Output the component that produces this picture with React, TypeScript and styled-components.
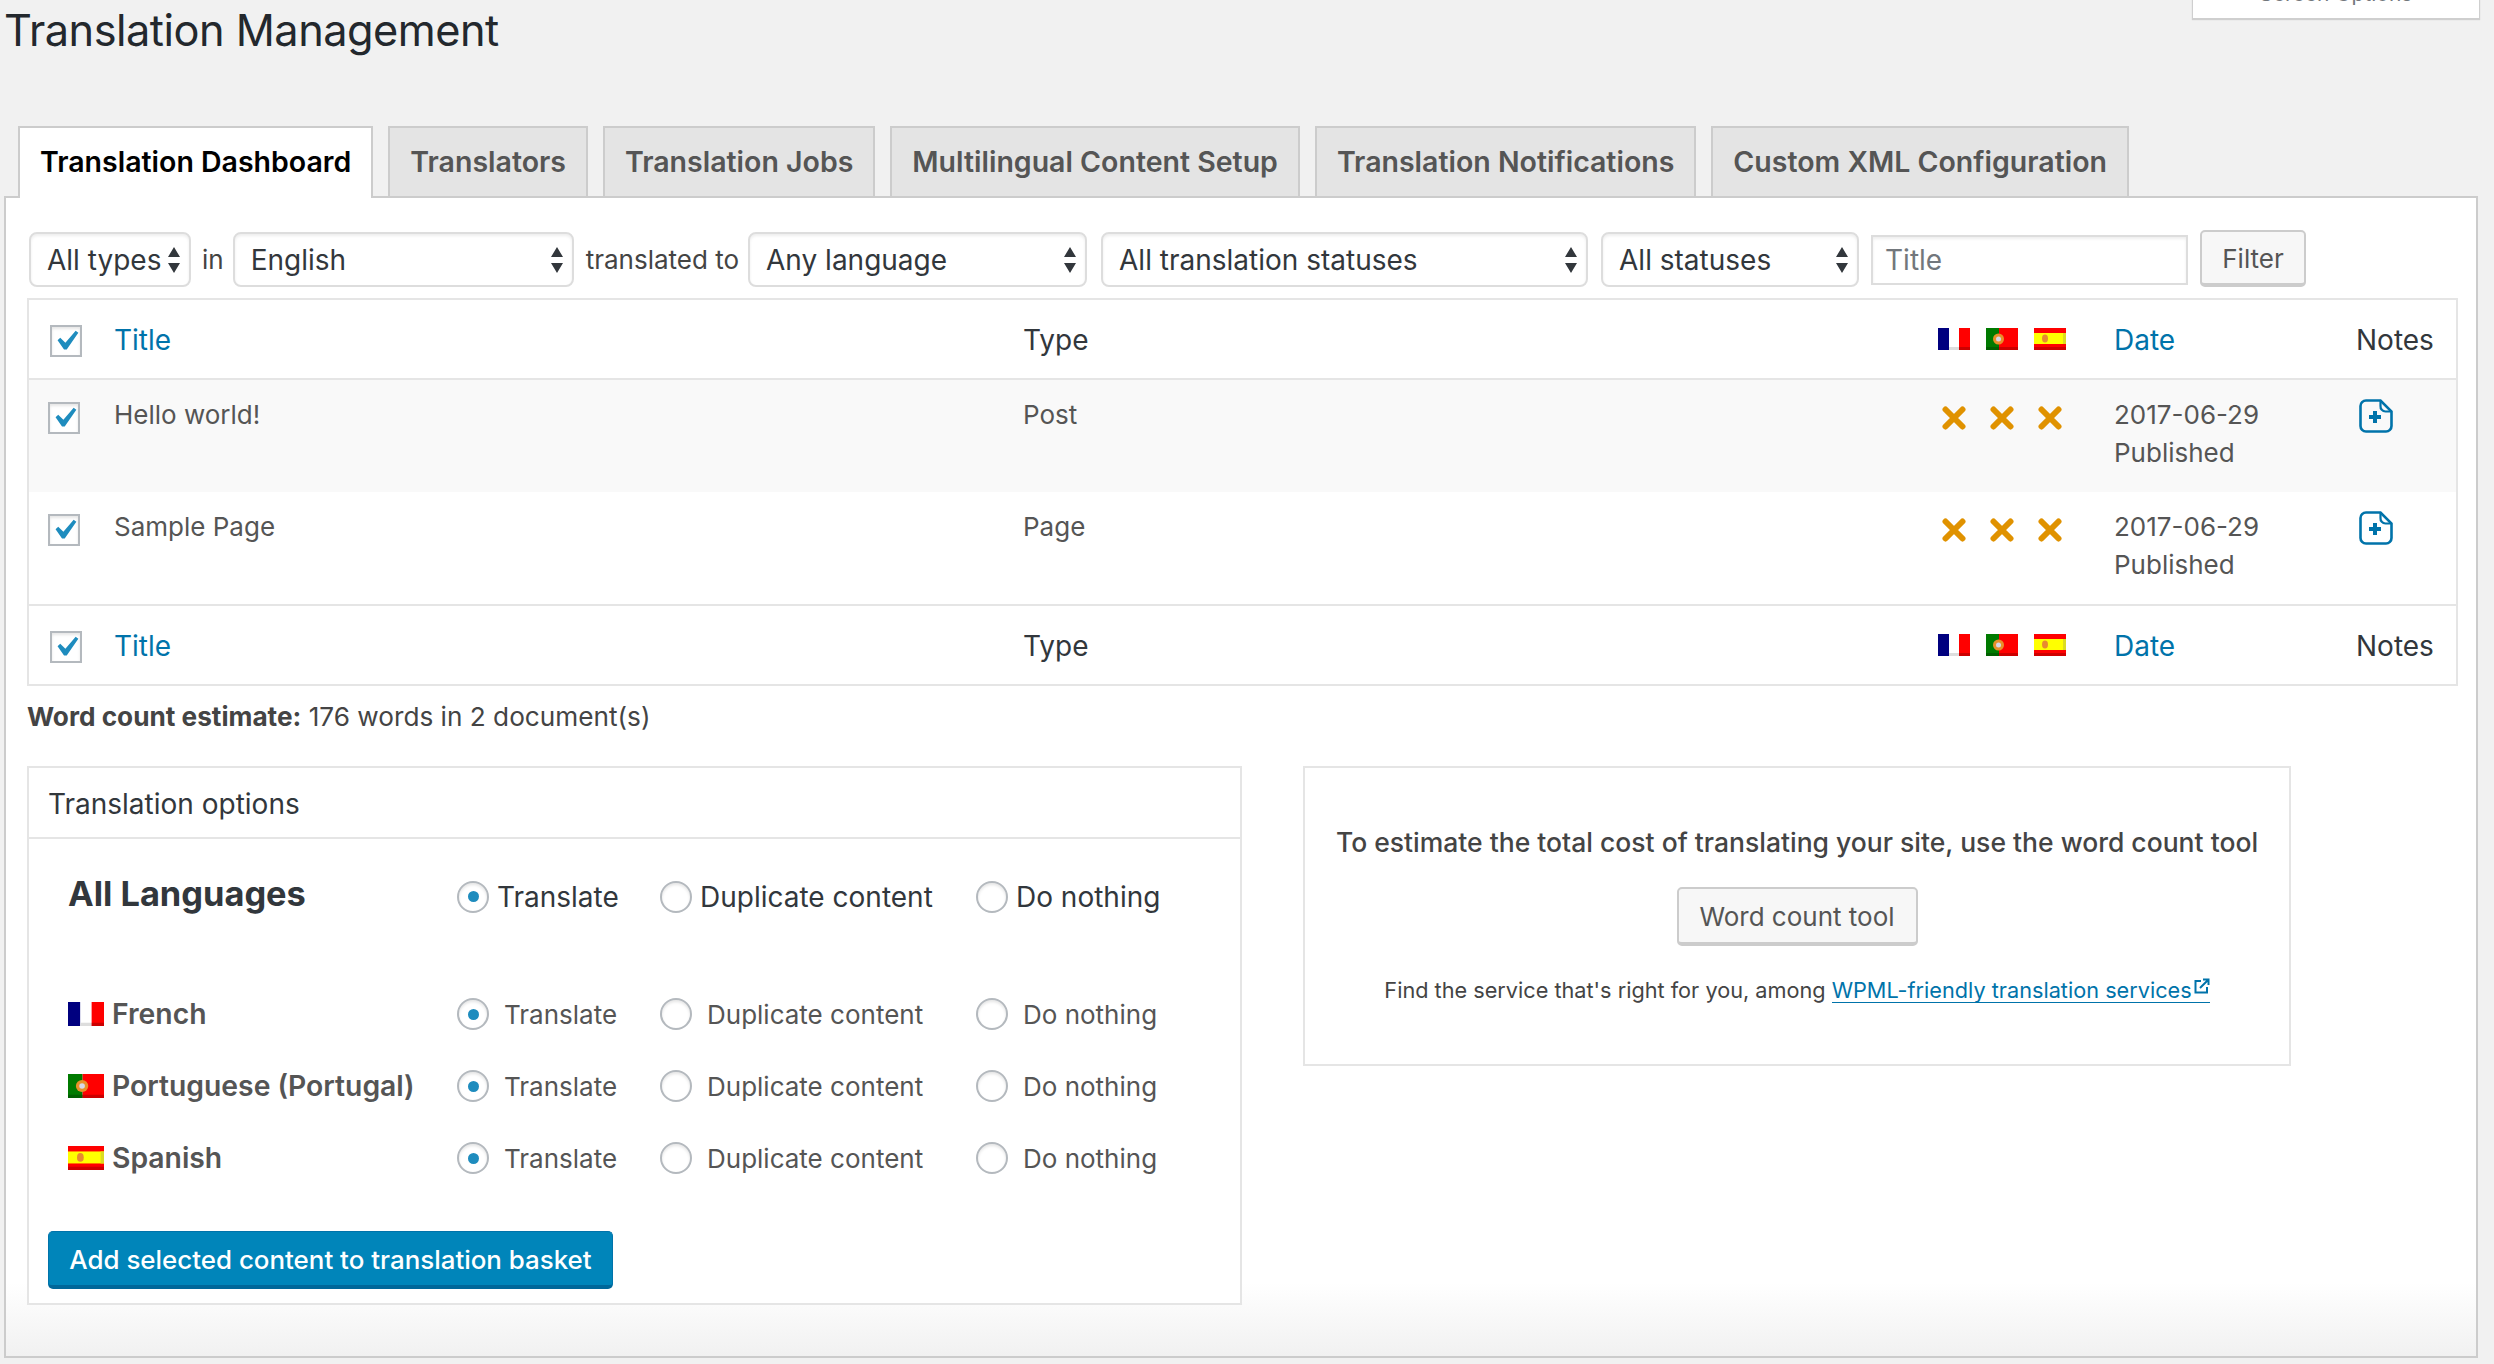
import { FC } from 'react';
import styled, { createGlobalStyle } from 'styled-components';

const GlobalStyle = createGlobalStyle`
  html, body {
    margin: 0;
    padding: 0;
    background: #f1f1f1;
  }
  body {
    font-family: Inter, "Liberation Sans", sans-serif;
    color: #444;
  }
`;

const Page = styled.div`
  position: relative;
  width: 2494px;
  height: 1364px;
  overflow: hidden;
  padding: 0 16px 0 4px;
  box-sizing: border-box;
`;

const ScreenOptions = styled.div`
  position: absolute;
  top: 0;
  right: 15px;
  width: 286px;
  height: 18px;
  box-sizing: border-box;
  overflow: hidden;
  background: #fff;
  box-shadow: 0 1px 1px 1px rgba(0, 0, 0, 0.14);
  font-size: 21px;
  line-height: 24px;
  color: #72777c;
  text-align: center;
  span {
    display: block;
    margin-top: -18px;
  }
`;

const Heading = styled.h1`
  margin: 0;
  height: 126px;
  font-size: 43.3px;
  font-weight: 400;
  letter-spacing: -0.5px;
  line-height: 60px;
  color: #23282d;
`;

const Tabs = styled.div`
  display: flex;
  gap: 15px;
  margin-left: 14px;
  height: 72px;
`;

const Tab = styled.div<{ $active?: boolean }>`
  height: ${(p) => (p.$active ? 72 : 70)}px;
  box-sizing: border-box;
  padding: 0 20px;
  border: 2px solid #ccc;
  border-bottom: ${(p) => (p.$active ? 'none' : '0')};
  background: ${(p) => (p.$active ? '#fff' : '#e4e4e4')};
  color: ${(p) => (p.$active ? '#000' : '#555')};
  font-size: 28.5px;
  font-weight: 600;
  line-height: 68px;
  white-space: nowrap;
  position: relative;
  z-index: 1;
`;

const Panel = styled.div`
  margin-top: -2px;
  height: 1162px;
  box-sizing: border-box;
  border: 2px solid #ccc;
  padding: 34px 18px 0 21px;
  background: linear-gradient(to bottom, #fff 0, #fff 1085px, #f1f1f1 100%);
`;

const FilterBar = styled.div`
  display: flex;
  align-items: center;
  height: 55px;
  color: #444;
  font-size: 26px;
`;

const SelectBox = styled.div<{ $w: number; $ml: number }>`
  width: ${(p) => p.$w}px;
  margin-left: ${(p) => p.$ml}px;
  height: 55px;
  box-sizing: border-box;
  display: flex;
  align-items: center;
  justify-content: space-between;
  padding: 0 9px 0 16px;
  border: 2px solid #ddd;
  border-radius: 8px;
  background: #fff;
  box-shadow: inset 0 2px 3px rgba(0, 0, 0, 0.07);
  color: #32373c;
  font-size: 28px;
  flex: none;
`;

const FilterText = styled.span<{ $ml: number }>`
  margin-left: ${(p) => p.$ml}px;
  flex: none;
`;

const TitleInput = styled.div`
  width: 317px;
  height: 50px;
  margin-left: 12px;
  box-sizing: border-box;
  padding-left: 12px;
  border: 2px solid #ddd;
  background: #fff;
  box-shadow: inset 0 2px 3px rgba(0, 0, 0, 0.07);
  color: #72777c;
  font-size: 28px;
  line-height: 46px;
  flex: none;
`;

const GreyButton = styled.div<{ $w: number; $h: number }>`
  width: ${(p) => p.$w}px;
  height: ${(p) => p.$h}px;
  box-sizing: border-box;
  padding-top: 2px;
  border: 2px solid #ccc;
  border-bottom-width: 4px;
  border-radius: 5px;
  background: #f7f7f7;
  color: #555;
  font-size: 26px;
  display: flex;
  align-items: center;
  justify-content: center;
  flex: none;
`;

const FilterButton = styled(GreyButton)`
  margin-left: 12px;
  margin-top: -2px;
`;

const Table = styled.div`
  margin-top: 11px;
  border: 2px solid #e5e5e5;
  background: #fff;
`;

const Row = styled.div<{ $h: number; $alt?: boolean; $center?: boolean; $line?: boolean }>`
  display: grid;
  grid-template-columns: 85px 909px 915px 176px 242px 1fr;
  height: ${(p) => p.$h}px;
  box-sizing: border-box;
  align-items: ${(p) => (p.$center ? 'center' : 'start')};
  padding-top: ${(p) => (p.$center ? 2 : 16)}px;
  background: ${(p) => (p.$alt ? '#f9f9f9' : '#fff')};
  border-bottom: ${(p) => (p.$line ? '2px solid #e5e5e5' : 'none')};
  font-size: ${(p) => (p.$center ? 28 : 26)}px;
  line-height: 38px;
  color: ${(p) => (p.$center ? '#32373c' : '#555')};
`;

const CheckCell = styled.div<{ $pl: number; $mt: number }>`
  padding-left: ${(p) => p.$pl}px;
  margin-top: ${(p) => p.$mt}px;
  display: flex;
`;

const SortLink = styled.span`
  color: #0073aa;
`;

const FlagCell = styled.div`
  display: flex;
  gap: 16px;
  margin-top: -3px;
`;

const MarkCell = styled.div`
  display: flex;
  gap: 24px;
  padding-left: 4px;
  margin-top: 10px;
`;

const NoteCell = styled.div`
  margin-top: 3px;
  margin-left: 3px;
  display: flex;
`;

const WordCount = styled.p`
  margin: 12px 0 0 0;
  font-size: 26.2px;
  line-height: 38px;
  color: #444;
`;

const Columns = styled.div`
  display: flex;
  align-items: flex-start;
  gap: 61px;
  margin-top: 30px;
`;

const OptionsBox = styled.div`
  width: 1215px;
  box-sizing: border-box;
  border: 2px solid #e5e5e5;
  background: #fff;
`;

const OptionsHead = styled.div`
  height: 71px;
  box-sizing: border-box;
  border-bottom: 2px solid #e5e5e5;
  padding-left: 19px;
  font-size: 28px;
  line-height: 72px;
  color: #32373c;
`;

const OptionsBody = styled.div`
  padding: 40px 0 14px 19px;
`;

const LangRow = styled.div<{ $mb: number }>`
  display: grid;
  grid-template-columns: 389px 203px 316px 1fr;
  align-items: center;
  height: 32px;
  margin: 0 0 ${(p) => p.$mb}px 20px;
`;

const LangName = styled.div<{ $big?: boolean }>`
  display: flex;
  align-items: center;
  gap: 8px;
  font-size: ${(p) => (p.$big ? 34.4 : 28.3)}px;
  font-weight: ${(p) => (p.$big ? 700 : 600)};
  color: ${(p) => (p.$big ? '#32373c' : '#555')};
  white-space: nowrap;
  margin-top: ${(p) => (p.$big ? -6 : 0)}px;
`;

const RadioLabel = styled.label<{ $big?: boolean }>`
  display: flex;
  align-items: center;
  gap: ${(p) => (p.$big ? 8 : 15)}px;
  font-size: ${(p) => (p.$big ? 28 : 26)}px;
  color: ${(p) => (p.$big ? '#32373c' : '#555')};
  white-space: nowrap;
`;

const RadioText = styled.span`
  margin-top: 1px;
`;

const RadioCircle = styled.span<{ $on?: boolean }>`
  width: 32px;
  height: 32px;
  box-sizing: border-box;
  border: 2px solid #b4b9be;
  border-radius: 50%;
  background: #fff;
  box-shadow: inset 0 2px 3px rgba(0, 0, 0, 0.1);
  display: flex;
  align-items: center;
  justify-content: center;
  flex: none;
  &::before {
    content: '';
    display: ${(p) => (p.$on ? 'block' : 'none')};
    width: 11px;
    height: 11px;
    border-radius: 50%;
    background: #1e8cbe;
  }
`;

const CheckBox = styled.span`
  width: 32px;
  height: 32px;
  box-sizing: border-box;
  border: 2px solid #b4b9be;
  background: #fff;
  box-shadow: inset 0 2px 3px rgba(0, 0, 0, 0.1);
  display: flex;
  align-items: center;
  justify-content: center;
`;

const CheckSvg = styled.svg`
  flex: none;
`;

const PrimaryButton = styled.div`
  width: 565px;
  height: 58px;
  margin-top: 58px;
  box-sizing: border-box;
  padding-top: 2px;
  border: 1px solid #0073aa;
  border-bottom: 4px solid #006799;
  border-radius: 5px;
  background: #0085ba;
  color: #fff;
  font-size: 25.9px;
  font-weight: 500;
  display: flex;
  align-items: center;
  justify-content: center;
  white-space: nowrap;
`;

const CostBox = styled.div`
  width: 988px;
  height: 300px;
  box-sizing: border-box;
  border: 2px solid #e5e5e5;
  background: #fff;
  display: flex;
  flex-direction: column;
  align-items: center;
  padding-top: 55px;
`;

const CostTitle = styled.div`
  font-size: 26.5px;
  font-weight: 500;
  line-height: 38px;
  color: #444;
  white-space: nowrap;
`;

const CostNote = styled.div`
  margin-top: 32px;
  font-size: 21.7px;
  line-height: 24px;
  color: #444;
  white-space: nowrap;
  display: flex;
  gap: 6px;
`;

const ServiceLink = styled.span`
  color: #0073aa;
  border-bottom: 1.5px solid #0073aa;
  display: inline-flex;
  align-items: flex-start;
  gap: 2px;
`;

const CostButton = styled(GreyButton)`
  margin-top: 26px;
`;

const SelectArrows: FC = () => (
  <svg width="12" height="26" viewBox="0 0 12 26">
    <path d="M6 0 L12 10 H0 Z M6 26 L12 16 H0 Z" fill="#32373c" />
  </svg>
);

const FlagFr: FC<{ w: number; h: number }> = ({ w, h }) => (
  <svg width={w} height={h} viewBox="0 0 32 22" preserveAspectRatio="none">
    <rect width="11" height="22" fill="#00007f" />
    <rect x="11" width="10" height="22" fill="#fff" />
    <rect x="21" width="11" height="22" fill="#f00" />
    <rect x="11" y="19" width="10" height="3" fill="#ddd" />
    <rect x="21" y="19" width="11" height="3" fill="#c00" />
  </svg>
);

const FlagPt: FC<{ w: number; h: number }> = ({ w, h }) => (
  <svg width={w} height={h} viewBox="0 0 32 22" preserveAspectRatio="none">
    <rect width="13" height="22" fill="#007a00" />
    <rect x="13" width="19" height="22" fill="#f00" />
    <rect y="19" width="13" height="3" fill="#006000" />
    <rect x="13" y="19" width="19" height="3" fill="#c00" />
    <circle cx="12.5" cy="11" r="5.5" fill="#e8902a" />
    <circle cx="12.5" cy="11" r="2.5" fill="#d8d8e8" />
  </svg>
);

const FlagEs: FC<{ w: number; h: number }> = ({ w, h }) => (
  <svg width={w} height={h} viewBox="0 0 32 22" preserveAspectRatio="none">
    <rect width="32" height="22" fill="#f00" />
    <rect y="5" width="32" height="11" fill="#ff0" />
    <rect x="29" y="5" width="3" height="11" fill="#dcdc20" />
    <rect y="19" width="32" height="3" fill="#d00000" />
    <ellipse cx="11" cy="10.5" rx="3" ry="4" fill="#e88a30" />
  </svg>
);

const CrossMark: FC = () => (
  <svg width="24" height="24" viewBox="0 0 24 24">
    <path d="M3.5 3.5 L20.5 20.5 M20.5 3.5 L3.5 20.5" stroke="#e09200" strokeWidth="6" strokeLinecap="round" />
  </svg>
);

const NoteIcon: FC = () => (
  <svg width="34" height="34" viewBox="0 0 34 34" fill="none">
    <path
      d="M7 1.5 H21.5 L32.5 12.5 V27 A5.5 5.5 0 0 1 27 32.5 H7 A5.5 5.5 0 0 1 1.5 27 V7 A5.5 5.5 0 0 1 7 1.5 Z"
      stroke="#0073aa"
      strokeWidth="2.6"
    />
    <path d="M21.5 1.5 V7 A5 5 0 0 0 26.5 12.5 H32.5" stroke="#0073aa" strokeWidth="2.2" />
    <path d="M16 12 V24 M10 18 H22" stroke="#0073aa" strokeWidth="4" />
  </svg>
);

const CheckMark: FC = () => (
  <CheckSvg width="40" height="40" viewBox="0 0 20 20">
    <path d="M14.83 4.89l1.34.94-5.81 8.38H9.02L5.78 9.67l1.34-1.25 2.57 2.4z" fill="#1e8cbe" />
  </CheckSvg>
);

const ExternalIcon: FC = () => (
  <svg width="16" height="16" viewBox="0 0 16 16" fill="none">
    <path d="M7 3 H1.5 V14.5 H13 V9" stroke="#0073aa" strokeWidth="2" />
    <path d="M6 10 L14 2 M9 1.5 H14.5 V7" stroke="#0073aa" strokeWidth="2" />
  </svg>
);

const Flags: FC = () => (
  <FlagCell>
    <FlagFr w={32} h={22} />
    <FlagPt w={32} h={22} />
    <FlagEs w={32} h={22} />
  </FlagCell>
);

const HeadRow: FC<{ h: number; line?: boolean }> = ({ h, line }) => (
  <Row $h={h} $center $line={line}>
    <CheckCell $pl={21} $mt={2}>
      <CheckBox>
        <CheckMark />
      </CheckBox>
    </CheckCell>
    <SortLink>Title</SortLink>
    <div>Type</div>
    <Flags />
    <SortLink>Date</SortLink>
    <div>Notes</div>
  </Row>
);

const DocRow: FC<{ title: string; type: string; alt?: boolean; line?: boolean }> = ({ title, type, alt, line }) => (
  <Row $h={line ? 114 : 112} $alt={alt} $line={line}>
    <CheckCell $pl={19} $mt={6}>
      <CheckBox>
        <CheckMark />
      </CheckBox>
    </CheckCell>
    <div>{title}</div>
    <div>{type}</div>
    <MarkCell>
      <CrossMark />
      <CrossMark />
      <CrossMark />
    </MarkCell>
    <div>
      2017-06-29
      <br />
      Published
    </div>
    <NoteCell>
      <NoteIcon />
    </NoteCell>
  </Row>
);

const Choice: FC<{ label: string; on?: boolean; big?: boolean }> = ({ label, on, big }) => (
  <RadioLabel $big={big}>
    <RadioCircle $on={on} />
    <RadioText>{label}</RadioText>
  </RadioLabel>
);

const Choices: FC<{ big?: boolean }> = ({ big }) => (
  <>
    <Choice label="Translate" on big={big} />
    <Choice label="Duplicate content" big={big} />
    <Choice label="Do nothing" big={big} />
  </>
);

const App: FC = () => (
  <Page>
    <GlobalStyle />
    <ScreenOptions>
      <span>Screen Options</span>
    </ScreenOptions>
    <Heading>Translation Management</Heading>
    <Tabs>
      <Tab $active>Translation Dashboard</Tab>
      <Tab>Translators</Tab>
      <Tab>Translation Jobs</Tab>
      <Tab>Multilingual Content Setup</Tab>
      <Tab>Translation Notifications</Tab>
      <Tab>Custom XML Configuration</Tab>
    </Tabs>
    <Panel>
      <FilterBar>
        <SelectBox $w={162} $ml={2}>
          All types
          <SelectArrows />
        </SelectBox>
        <FilterText $ml={11}>in</FilterText>
        <SelectBox $w={341} $ml={9}>
          English
          <SelectArrows />
        </SelectBox>
        <FilterText $ml={12}>translated to</FilterText>
        <SelectBox $w={339} $ml={9}>
          Any language
          <SelectArrows />
        </SelectBox>
        <SelectBox $w={487} $ml={14}>
          All translation statuses
          <SelectArrows />
        </SelectBox>
        <SelectBox $w={258} $ml={13}>
          All statuses
          <SelectArrows />
        </SelectBox>
        <TitleInput>Title</TitleInput>
        <FilterButton $w={106} $h={57}>
          Filter
        </FilterButton>
      </FilterBar>
      <Table>
        <HeadRow h={80} line />
        <DocRow title="Hello world!" type="Post" alt />
        <DocRow title="Sample Page" type="Page" line />
        <HeadRow h={78} />
      </Table>
      <WordCount>
        <strong>Word count estimate:</strong> 176 words in 2 document(s)
      </WordCount>
      <Columns>
        <OptionsBox>
          <OptionsHead>Translation options</OptionsHead>
          <OptionsBody>
            <LangRow $mb={86}>
              <LangName $big>All Languages</LangName>
              <Choices big />
            </LangRow>
            <LangRow $mb={40}>
              <LangName>
                <FlagFr w={36} h={24} />
                French
              </LangName>
              <Choices />
            </LangRow>
            <LangRow $mb={40}>
              <LangName>
                <FlagPt w={36} h={24} />
                Portuguese (Portugal)
              </LangName>
              <Choices />
            </LangRow>
            <LangRow $mb={0}>
              <LangName>
                <FlagEs w={36} h={24} />
                Spanish
              </LangName>
              <Choices />
            </LangRow>
            <PrimaryButton>Add selected content to translation basket</PrimaryButton>
          </OptionsBody>
        </OptionsBox>
        <CostBox>
          <CostTitle>To estimate the total cost of translating your site, use the word count tool</CostTitle>
          <CostButton $w={241} $h={59}>
            Word count tool
          </CostButton>
          <CostNote>
            Find the service that's right for you, among
            <ServiceLink>
              WPML-friendly translation services
              <ExternalIcon />
            </ServiceLink>
          </CostNote>
        </CostBox>
      </Columns>
    </Panel>
  </Page>
);

export default App;
